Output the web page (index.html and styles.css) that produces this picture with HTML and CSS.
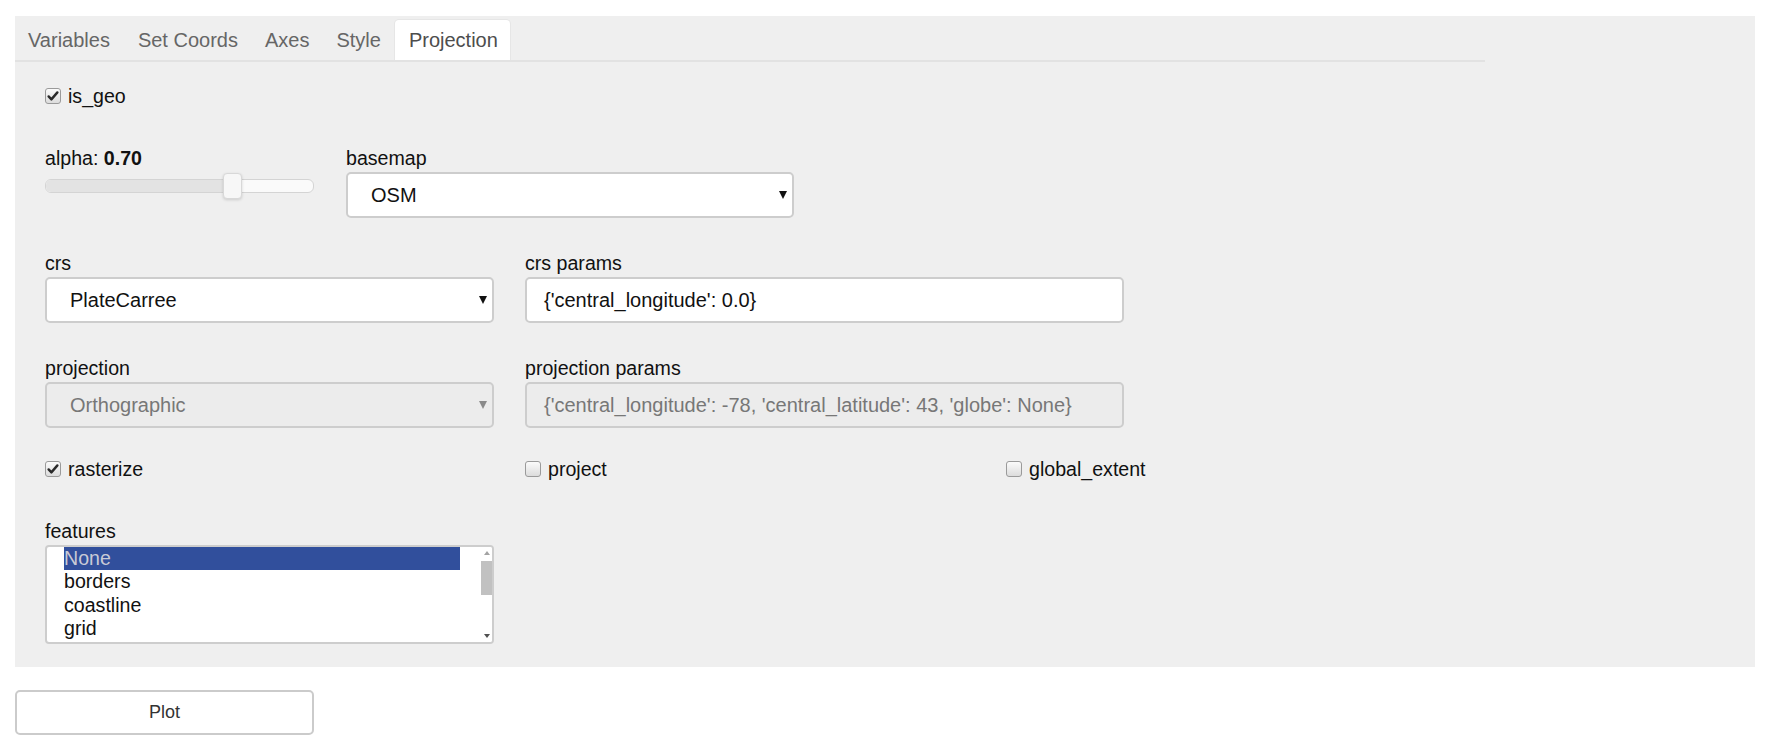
FILE: index.html
```html
<!DOCTYPE html>
<html>
<head>
<meta charset="utf-8">
<link rel="stylesheet" href="styles.css">
</head>
<body>
<div class="panel">
  <div class="tabs">
    <div class="tab">Variables</div>
    <div class="tab">Set Coords</div>
    <div class="tab">Axes</div>
    <div class="tab">Style</div>
    <div class="tab active">Projection</div>
  </div>
  <div class="content">
    <div class="check-row row-geo">
      <label class="check"><span class="box checked"><svg viewBox="0 0 16 16" width="16" height="16"><path d="M3.6 8.4 L6.4 11.4 L12.4 4.4" fill="none" stroke="#2a2a2a" stroke-width="2.4" stroke-linecap="round" stroke-linejoin="round"/></svg></span><span class="check-text">is_geo</span></label>
    </div>

    <div class="row row-alpha">
      <div class="field w-slider">
        <div class="label">alpha: <b>0.70</b></div>
        <div class="slider">
          <div class="track"><div class="fill"></div></div>
          <div class="handle"></div>
        </div>
      </div>
      <div class="field w-basemap">
        <div class="label">basemap</div>
        <div class="select"><span class="val">OSM</span><span class="arrow"></span></div>
      </div>
    </div>

    <div class="row row-crs">
      <div class="field w-left">
        <div class="label">crs</div>
        <div class="select"><span class="val">PlateCarree</span><span class="arrow"></span></div>
      </div>
      <div class="field w-right">
        <div class="label">crs params</div>
        <div class="input"><span class="val">{'central_longitude': 0.0}</span></div>
      </div>
    </div>

    <div class="row row-proj">
      <div class="field w-left">
        <div class="label">projection</div>
        <div class="select disabled"><span class="val">Orthographic</span><span class="arrow"></span></div>
      </div>
      <div class="field w-right">
        <div class="label">projection params</div>
        <div class="input disabled"><span class="val">{'central_longitude': -78, 'central_latitude': 43, 'globe': None}</span></div>
      </div>
    </div>

    <div class="check-row row-checks">
      <label class="check w-c1"><span class="box checked"><svg viewBox="0 0 16 16" width="16" height="16"><path d="M3.6 8.4 L6.4 11.4 L12.4 4.4" fill="none" stroke="#2a2a2a" stroke-width="2.4" stroke-linecap="round" stroke-linejoin="round"/></svg></span><span class="check-text">rasterize</span></label>
      <label class="check w-c2"><span class="box"></span><span class="check-text">project</span></label>
      <label class="check"><span class="box"></span><span class="check-text">global_extent</span></label>
    </div>

    <div class="row row-features">
      <div class="field w-left">
        <div class="label">features</div>
        <div class="listbox">
          <div class="options">
            <div class="opt selected">None</div>
            <div class="opt">borders</div>
            <div class="opt">coastline</div>
            <div class="opt">grid</div>
          </div>
          <div class="scrollbar">
            <span class="sb-up"></span>
            <span class="sb-thumb"></span>
            <span class="sb-down"></span>
          </div>
        </div>
      </div>
    </div>
  </div>
</div>
<div class="actions">
  <button class="btn">Plot</button>
</div>
</body>
</html>
```

FILE: styles.css
```css
* { box-sizing: border-box; }
html, body { margin: 0; padding: 0; background: #ffffff; }
body {
  font-family: "Liberation Sans", Arial, sans-serif;
  font-size: 19.6px;
  color: #111;
}
.panel {
  margin: 16px 0 0 15px;
  width: 1740px;
  height: 651px;
  background: #efefef;
  padding-top: 4px;
}
.tabs {
  display: flex;
  width: 1470px;
  height: 42px;
  border-bottom: 2px solid #e2e2e2;
}
.tab {
  height: 40px;
  line-height: 40px;
  font-size: 20px;
  padding: 0 14px 0 13px;
  color: #666;
  white-space: nowrap;
}
.tab:nth-child(2) { padding-left: 14px; }
.tab.active {
  background: #ffffff;
  color: #4d4d4d;
  border-radius: 4px 4px 0 0;
  box-shadow: 0 -1px 0 #e6e6e6, 1px 0 0 #e6e6e6, -1px 0 0 #e6e6e6;
  padding: 0 12px 0 14px;
}
.content {
  padding-left: 30px;
}
.row { display: flex; }
.field { display: flex; flex-direction: column; }
.label {
  height: 22px;
  line-height: 22px;
  color: #111;
  white-space: nowrap;
}
.label b { font-weight: bold; }
.check-row { display: flex; align-items: center; height: 22px; }
.row-geo { margin-top: 23px; }
.row-alpha { margin-top: 40px; }
.row-crs { margin-top: 34px; }
.row-proj { margin-top: 34px; }
.row-checks { margin-top: 30px; }
.row-features { margin-top: 40px; }

.w-slider { width: 269px; margin-right: 32px; }
.w-basemap { width: 448px; }
.w-left { width: 449px; margin-right: 31px; }
.w-right { width: 599px; }
.w-c1 { width: 480px; }
.w-c2 { width: 481px; }

.check { display: flex; align-items: center; height: 22px; }
.box {
  width: 16px;
  height: 16px;
  border: 1px solid #9a9a9a;
  border-radius: 3px;
  background: linear-gradient(#fbfbfb, #dcdcdc);
  margin-right: 7px;
  display: flex;
  align-items: center;
  justify-content: center;
  flex: none;
}
.box svg { display: block; margin: -1px; }
.check-text { line-height: 22px; white-space: nowrap; }

.slider {
  position: relative;
  height: 26px;
  margin-top: 4px;
}
.track {
  position: absolute;
  left: 0; right: 0;
  top: 6px;
  height: 14px;
  border: 1px solid #d4d4d4;
  border-radius: 6px;
  background: #fafafa;
  overflow: hidden;
}
.fill {
  width: 182px;
  height: 100%;
  background: #e3e3e3;
}
.handle {
  position: absolute;
  left: 178px;
  top: 0;
  width: 19px;
  height: 26px;
  background: #f7f7f7;
  border: 1px solid #d8d8d8;
  border-radius: 4px;
  box-shadow: 0 1px 3px rgba(0,0,0,0.15);
}

.select, .input {
  position: relative;
  margin-top: 3px;
  height: 46px;
  background: #ffffff;
  border: 2px solid #cdcdcd;
  border-radius: 5px;
  display: flex;
  align-items: center;
  white-space: nowrap;
  overflow: hidden;
  font-size: 20px;
}
.select { padding-left: 23px; }
.input { padding-left: 17px; }
.val { color: #111; }
.arrow {
  position: absolute;
  right: 5px;
  top: 50%;
  margin-top: -4px;
  width: 0; height: 0;
  border-left: 4.5px solid transparent;
  border-right: 4.5px solid transparent;
  border-top: 8px solid #111;
}
.disabled { background: #ececec; }
.disabled .val { color: #777; }
.disabled .arrow { border-top-color: #8a8a8a; }

.listbox {
  position: relative;
  margin-top: 3px;
  height: 99px;
  background: #ffffff;
  border: 2px solid #cdcdcd;
  border-radius: 4px;
  display: flex;
  overflow: hidden;
}
.options {
  flex: 1;
  padding: 0 21px 0 17px;
}
.opt {
  height: 23.5px;
  line-height: 23.5px;
  color: #111;
  white-space: nowrap;
}
.opt.selected {
  background: #314f9c;
  color: #c9cad6;
  height: 23px;
}
.scrollbar {
  width: 11px;
  position: relative;
  background: #ffffff;
  flex: none;
}
.sb-thumb {
  position: absolute;
  left: 0; right: 0;
  top: 14px;
  height: 34px;
  background: #c1c1c1;
}
.sb-up, .sb-down {
  position: absolute;
  left: 50%;
  margin-left: -3px;
  width: 0; height: 0;
  border-left: 3px solid transparent;
  border-right: 3px solid transparent;
}
.sb-up { top: 4px; border-bottom: 4px solid #a3a3a3; }
.sb-down { bottom: 4px; border-top: 4px solid #505050; }

.actions { padding: 23px 0 0 15px; }
.btn {
  width: 299px;
  height: 45px;
  background: #ffffff;
  border: 2px solid #cbcbcb;
  border-radius: 5px;
  font-family: "Liberation Sans", Arial, sans-serif;
  font-size: 18px;
  color: #333;
  padding: 0;
}
```
